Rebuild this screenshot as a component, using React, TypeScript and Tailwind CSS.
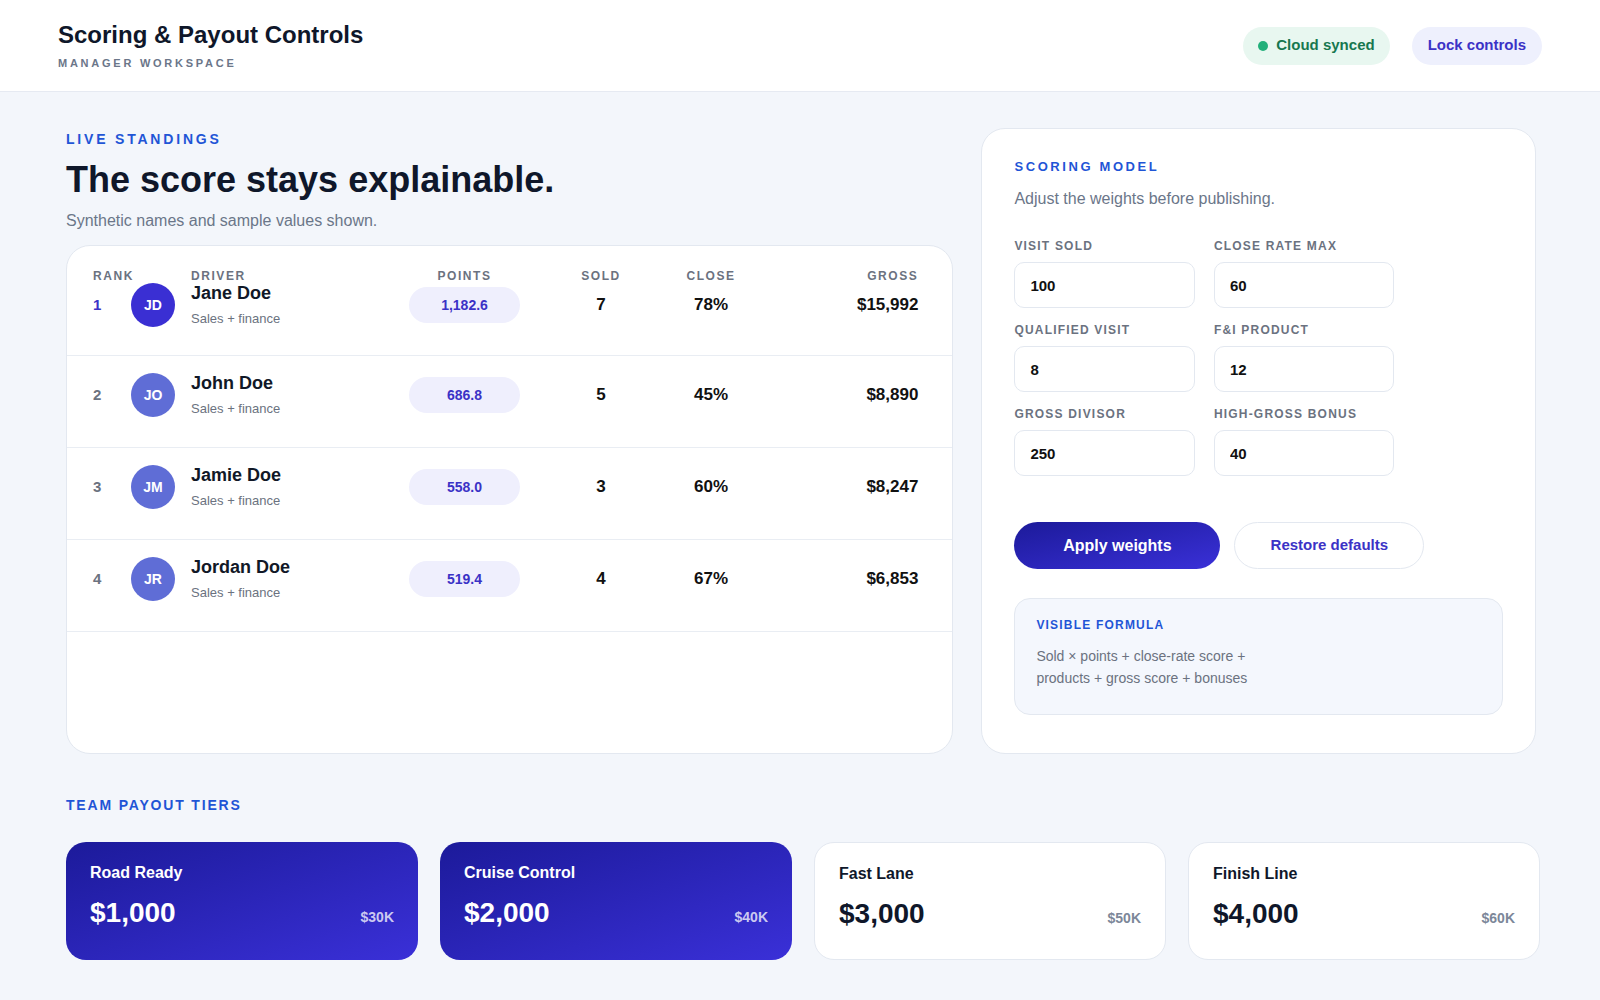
const drivers = [
  { rank: 1, initials: "JD", name: "Jane Doe", points: "1,182.6", sold: 7, close: "78%", gross: "$15,992", lead: true },
  { rank: 2, initials: "JO", name: "John Doe", points: "686.8", sold: 5, close: "45%", gross: "$8,890", lead: false },
  { rank: 3, initials: "JM", name: "Jamie Doe", points: "558.0", sold: 3, close: "60%", gross: "$8,247", lead: false },
  { rank: 4, initials: "JR", name: "Jordan Doe", points: "519.4", sold: 4, close: "67%", gross: "$6,853", lead: false },
];

const weights = [
  { label: "Visit sold", value: "100" },
  { label: "Close rate max", value: "60" },
  { label: "Qualified visit", value: "8" },
  { label: "F&I product", value: "12" },
  { label: "Gross divisor", value: "250" },
  { label: "High-gross bonus", value: "40" },
];

const tiers = [
  { name: "Road Ready", payout: "$1,000", target: "$30K", filled: true },
  { name: "Cruise Control", payout: "$2,000", target: "$40K", filled: true },
  { name: "Fast Lane", payout: "$3,000", target: "$50K", filled: false },
  { name: "Finish Line", payout: "$4,000", target: "$60K", filled: false },
];

const cols = "grid grid-cols-[98px_218px_111px_162px_58px_1fr]";

export default function App() {
  return (
    <div className="min-h-screen bg-[#f3f6fb] font-['Liberation_Sans',Arial,sans-serif] text-[#0f172a]">
      {/* Header */}
      <header className="flex h-[92px] items-center justify-between border-b border-[#e6eaf2] bg-white px-[58px]">
        <div>
          <h1 className="text-[24px] leading-[28px] font-bold text-[#0f172a]">Scoring &amp; Payout Controls</h1>
          <p className="mt-[7px] text-[11px] leading-[14px] font-bold tracking-[0.25em] text-[#6b7689] uppercase">
            Manager workspace
          </p>
        </div>
        <div className="flex items-center gap-[22px]">
          <span className="flex h-[38px] items-center gap-[8px] rounded-full bg-[#e8f7f0] px-[15px] text-[15px] font-bold text-[#17774f]">
            <span className="h-[10px] w-[10px] rounded-full bg-[#22b07a]" />
            Cloud synced
          </span>
          <button className="h-[38px] rounded-full bg-[#eef0fd] px-[16px] text-[15px] font-bold text-[#3b32c6]">
            Lock controls
          </button>
        </div>
      </header>

      <main className="pt-[36px] pr-[60px] pb-10 pl-[66px]">
        <div className="grid grid-cols-[1.6fr_1fr] gap-[28px] pr-[4px]">
          {/* Left column */}
          <section className="flex flex-col">
            <p className="mt-[3px] text-[14px] leading-[16px] font-bold tracking-[0.2em] text-[#1f55d6] uppercase">
              Live standings
            </p>
            <h2 className="mt-[13px] text-[36px] leading-[40px] font-bold text-[#0f172a]">The score stays explainable.</h2>
            <p className="mt-[11px] text-[16px] leading-[20px] text-[#6b7689]">Synthetic names and sample values shown.</p>

            <div className="mt-[14px] flex-1 rounded-[24px] border border-[#e3e8f0] bg-white pt-[23px]">
              <div className={`${cols} pr-[34px] pl-[26px] text-[12px] leading-[14px] font-bold tracking-[0.13em] text-[#6b7280] uppercase`}>
                <span>Rank</span>
                <span>Driver</span>
                <span className="text-center">Points</span>
                <span className="text-center">Sold</span>
                <span className="text-center">Close</span>
                <span className="text-right">Gross</span>
              </div>
              {drivers.map((d) => (
                <div
                  key={d.rank}
                  className={`${cols} items-center border-b border-[#e9edf3] pr-[34px] pl-[26px] ${
                    d.lead ? "pt-0 pb-[28px]" : "pt-[17px] pb-[30px]"
                  }`}
                >
                  <div className="flex items-center">
                    <span className={`w-[38px] text-[15px] font-bold ${d.lead ? "text-[#3b32c6]" : "text-[#6b7280]"}`}>
                      {d.rank}
                    </span>
                    <span
                      className={`flex h-[44px] w-[44px] items-center justify-center rounded-full text-[14px] font-bold text-white ${
                        d.lead ? "bg-[#3a2fd3]" : "bg-[#5f6dd6]"
                      }`}
                    >
                      {d.initials}
                    </span>
                  </div>
                  <div className="-mt-[2px]">
                    <p className="text-[18px] leading-[22px] font-bold text-[#111827]">{d.name}</p>
                    <p className="mt-[7px] text-[13px] leading-[16px] text-[#6b7280]">Sales + finance</p>
                  </div>
                  <span className="flex h-[36px] items-center justify-center rounded-full bg-[#efeffd] text-[14px] font-bold text-[#3b32c6]">
                    {d.points}
                  </span>
                  <span className="text-center text-[17px] font-bold text-[#111]">{d.sold}</span>
                  <span className="text-center text-[17px] font-bold text-[#111]">{d.close}</span>
                  <span className="text-right text-[17px] font-bold text-[#111]">{d.gross}</span>
                </div>
              ))}
            </div>
          </section>

          {/* Right column */}
          <section className="rounded-[24px] border border-[#e3e8f0] bg-white px-8 pt-[30px] pb-[38px]">
            <p className="text-[13px] leading-[16px] font-bold tracking-[0.2em] text-[#1f55d6] uppercase">Scoring model</p>
            <p className="mt-[14px] text-[16px] leading-[20px] text-[#6b7689]">Adjust the weights before publishing.</p>

            <div className="mt-[30px] grid w-[380px] grid-cols-2 gap-x-[19px] gap-y-[15px]">
              {weights.map((w) => (
                <label key={w.label} className="block">
                  <span className="block text-[12px] leading-[14px] font-bold tracking-[0.1em] text-[#6b7280] uppercase">
                    {w.label}
                  </span>
                  <input
                    defaultValue={w.value}
                    className="mt-[9px] block h-[46px] w-full rounded-[10px] border border-[#e3e8f0] bg-white px-[15px] text-[15px] font-bold text-[#111] outline-none"
                  />
                </label>
              ))}
            </div>

            <div className="mt-[46px] flex items-center gap-[14px]">
              <button className="h-[47px] w-[206px] rounded-full bg-gradient-to-br from-[#1c1a9a] to-[#3a30d8] text-[16px] font-bold text-white">
                Apply weights
              </button>
              <button className="h-[47px] w-[190px] rounded-full border border-[#e3e8f0] bg-white text-[15px] font-bold text-[#3b32c6]">
                Restore defaults
              </button>
            </div>

            <div className="mt-[29px] rounded-[16px] border border-[#e3e8f0] bg-[#f4f7fd] px-[21px] pt-[19px] pb-[25px]">
              <p className="text-[12px] leading-[14px] font-bold tracking-[0.1em] text-[#1f55d6] uppercase">Visible formula</p>
              <p className="mt-[13px] max-w-[240px] text-[14px] leading-[22px] text-[#6b7280]">
                Sold × points + close-rate score + products + gross score + bonuses
              </p>
            </div>
          </section>
        </div>

        {/* Payout tiers */}
        <p className="mt-[43px] text-[14px] leading-[16px] font-bold tracking-[0.13em] text-[#1f55d6] uppercase">
          Team payout tiers
        </p>
        <div className="mt-[29px] grid grid-cols-4 gap-[22px]">
          {tiers.map((t) => (
            <div
              key={t.name}
              className={`h-[118px] rounded-[20px] px-[24px] pt-[21px] ${
                t.filled
                  ? "bg-gradient-to-br from-[#1c1a9a] to-[#3a30d8] text-white"
                  : "border border-[#e3e8f0] bg-white text-[#0f172a]"
              }`}
            >
              <p className="text-[16px] leading-[20px] font-bold">{t.name}</p>
              <div className="mt-[13px] flex items-baseline justify-between">
                <span className="text-[28px] leading-[34px] font-bold">{t.payout}</span>
                <span className={`text-[14px] font-bold ${t.filled ? "text-white/75" : "text-[#7c8799]"}`}>{t.target}</span>
              </div>
            </div>
          ))}
        </div>
      </main>
    </div>
  );
}
